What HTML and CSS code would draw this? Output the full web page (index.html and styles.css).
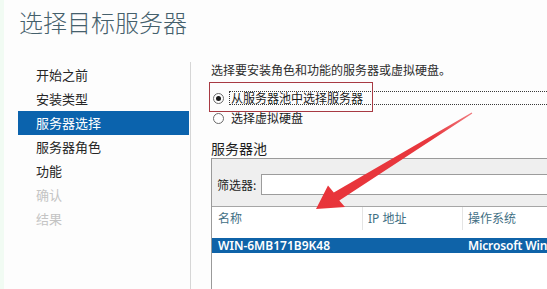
FILE: index.html
```html
<!DOCTYPE html>
<html lang="zh-CN">
<head>
<meta charset="utf-8">
<title>选择目标服务器</title>
<link rel="stylesheet" href="styles.css">
</head>
<body>
<div class="page">
  <header class="title">选择目标服务器</header>
  <div class="main">
    <nav class="nav">
      <div class="nav-item">开始之前</div>
      <div class="nav-item">安装类型</div>
      <div class="nav-item active">服务器选择</div>
      <div class="nav-item">服务器角色</div>
      <div class="nav-item">功能</div>
      <div class="nav-item disabled">确认</div>
      <div class="nav-item disabled">结果</div>
    </nav>
    <section class="content">
      <p class="desc">选择要安装角色和功能的服务器或虚拟硬盘。</p>
      <div class="radios">
        <div class="radio-row">
          <span class="radio checked"></span>
          <span class="radio-label focus">从服务器池中选择服务器</span>
        </div>
        <div class="radio-row">
          <span class="radio"></span>
          <span class="radio-label">选择虚拟硬盘</span>
        </div>
        <div class="annot-box"></div>
      </div>
      <h2 class="pool-title">服务器池</h2>
      <div class="pool">
        <div class="filter">
          <span class="filter-label">筛选器:</span>
          <div class="filter-input"></div>
        </div>
        <div class="thead">
          <div class="col c1">名称</div>
          <div class="col c2">IP 地址</div>
          <div class="col c3">操作系统</div>
        </div>
        <div class="trow selected">
          <div class="col c1">WIN-6MB171B9K48</div>
          <div class="col c2"></div>
          <div class="col c3 os">Microsoft Win</div>
        </div>
      </div>
    </section>
  </div>
  <svg class="arrow" width="547" height="289" viewBox="0 0 547 289" aria-hidden="true">
    <defs>
      <linearGradient id="ag" x1="472" y1="113" x2="316" y2="209" gradientUnits="userSpaceOnUse">
        <stop offset="0" stop-color="#f07a7e"/>
        <stop offset="0.25" stop-color="#e8383e"/>
        <stop offset="1" stop-color="#e8343a"/>
      </linearGradient>
    </defs>
    <polygon fill="url(#ag)" points="316,209 345,207 339.3,200.5 472.3,113.5 471.7,112.6 333.8,192.5 328,185.5"/>
  </svg>
</div>
</body>
</html>
```

FILE: styles.css
```css
* { box-sizing: border-box; }

html, body {
  margin: 0;
  padding: 0;
  background: #fdfdfd;
}

.page {
  position: relative;
  width: 547px;
  height: 289px;
  overflow: hidden;
  background: #fdfdfd;
  border-left: 4px solid #f1fbf3;
  font-family: "Noto Sans", "Noto Sans CJK SC", sans-serif;
  color: #1e1e1e;
}

.title {
  height: 62px;
  padding: 6px 0 0 15px;
  font-family: "Noto Sans CJK SC", sans-serif;
  font-size: 24px;
  line-height: 32px;
  font-weight: 300;
  color: #45606c;
}

.main {
  display: flex;
  height: 227px;
}

.nav {
  width: 187px;
  flex: none;
  border-right: 1px solid #d6d6d6;
  padding-top: 1px;
}

.nav-item {
  margin-left: 14px;
  width: 171px;
  height: 24px;
  line-height: 24px;
  padding-left: 18px;
  font-family: "Noto Sans CJK SC", sans-serif;
  font-size: 13px;
  color: #262626;
}

.nav-item.active {
  background: #0b63ad;
  color: #ffffff;
}

.nav-item.disabled {
  color: #c4c4c4;
}

.content {
  flex: 1;
  min-width: 0;
  overflow: hidden;
  padding-left: 20px;
}

.desc {
  margin: 0;
  font-family: "Noto Sans CJK SC", sans-serif;
  font-size: 12px;
  line-height: 16px;
  color: #2c2c2c;
}

.radios {
  position: relative;
  margin-top: 12px;
  display: flex;
  flex-direction: column;
  gap: 4px;
}

.radio-row {
  display: flex;
  align-items: center;
  height: 16px;
}

.radio {
  flex: none;
  width: 11px;
  height: 11px;
  margin-left: 2px;
  margin-right: 5px;
  border: 1px solid #6b6b6b;
  border-radius: 50%;
  background: #ffffff;
  display: flex;
  align-items: center;
  justify-content: center;
}

.radio.checked::after {
  content: "";
  width: 5px;
  height: 5px;
  border-radius: 50%;
  background: #1a1a1a;
}

.radio-label {
  font-family: "Noto Sans CJK SC", sans-serif;
  font-size: 12px;
  line-height: 14px;
  color: #1a1a1a;
  padding: 0 1px;
  border: 1px solid transparent;
}

.radio-label.focus {
  flex: 1;
  margin-right: -20px;
  line-height: 12px;
  border: 1px dotted #3a3a3a;
}

.annot-box {
  position: absolute;
  left: -2px;
  top: -8px;
  width: 164px;
  height: 30px;
  border: 1px solid #a83a43;
  pointer-events: none;
}

.pool-title {
  margin: 13px 0 1px;
  font-family: "Noto Sans CJK SC", sans-serif;
  font-size: 14px;
  line-height: 18px;
  font-weight: 400;
  color: #1e1e1e;
}

.pool {
  width: 500px;
  height: 200px;
  border: 1px solid #9a9a9a;
  background: #ffffff;
}

.filter {
  display: flex;
  align-items: flex-start;
  height: 48px;
  padding: 15px 0 0 5px;
  background: #efefef;
  border-bottom: 1px solid #a6a6a6;
}

.filter-label {
  width: 44px;
  flex: none;
  font-family: "Noto Sans CJK SC", sans-serif;
  font-size: 12px;
  line-height: 21px;
  color: #1e1e1e;
}

.filter-input {
  flex: 1;
  height: 21px;
  background: #ffffff;
  border: 1px solid #9c9c9c;
}

.thead,
.trow {
  display: flex;
}

.thead {
  height: 23px;
}

.thead .col {
  line-height: 24px;
  font-family: "Noto Sans", "Noto Sans CJK SC", sans-serif;
  font-size: 12px;
  color: #3f6f84;
}

.col {
  padding-left: 6px;
  white-space: nowrap;
  overflow: hidden;
}

.c1 { width: 150px; flex: none; }
.c2 { width: 100px; flex: none; }
.c3 { flex: 1; }

.thead .c2,
.thead .c3 {
  border-left: 1px solid #e4e4e4;
  padding-left: 5px;
}

.trow {
  margin-top: 8px;
  height: 15px;
}

.trow .col {
  line-height: 15px;
  font-size: 12px;
  font-weight: 600;
}

.trow .os {
  letter-spacing: -0.15px;
}

.trow.selected {
  background: #0f63a8;
  color: #ffffff;
}

.arrow {
  position: absolute;
  left: -4px;
  top: 0;
  pointer-events: none;
}
```
